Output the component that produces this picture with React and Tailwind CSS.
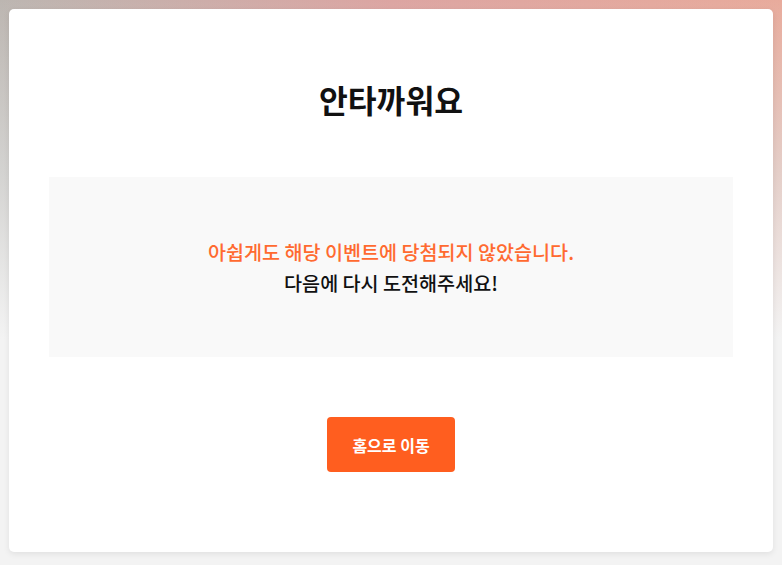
export default function App() {
  return (
    <div
      className="h-[565px] w-full px-[9px] pt-[9px] bg-[linear-gradient(to_bottom,rgba(243,243,243,0)_0%,rgba(226,229,229,0.6)_30%,#f3f3f3_60%),linear-gradient(to_right,#bcb6b1_0%,#dca5a2_50%,#e8ab9c_100%)]"
      style={{ fontFamily: '"Noto Sans CJK KR", "Noto Sans", sans-serif' }}
    >
      <div className="h-[543px] bg-white rounded-[5px] shadow-[0_2px_6px_rgba(0,0,0,0.08)] px-10 pt-[71px] flex flex-col items-center">
        <h1 className="h-[40px] leading-[40px] text-[31.3px] font-bold text-[#111]">안타까워요</h1>
        <div className="mt-[57px] w-full h-[180px] bg-[#f9f9f9] flex flex-col items-center justify-center">
          <p className="text-[19.6px] leading-[31px] font-medium text-[#ff6a30]">아쉽게도 해당 이벤트에 당첨되지 않았습니다.</p>
          <p className="text-[19.6px] leading-[31px] font-medium text-[#111]">다음에 다시 도전해주세요!</p>
        </div>
        <button className="mt-[60px] w-[128px] h-[55px] rounded-[4px] bg-[#ff5e1f] text-white text-[16px] font-bold">홈으로 이동</button>
      </div>
    </div>
  );
}
